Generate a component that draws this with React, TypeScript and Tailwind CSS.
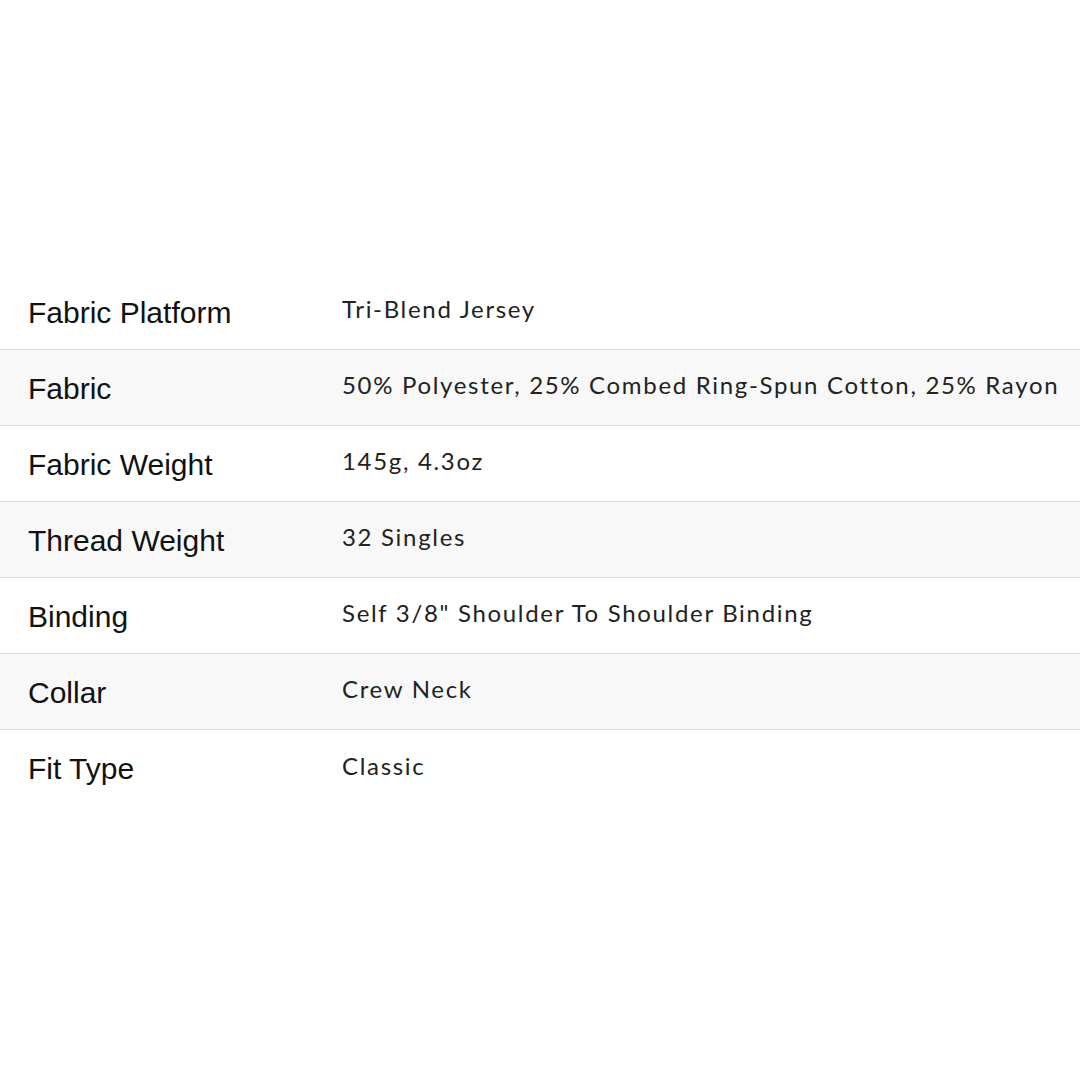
const specs = [
  { label: "Fabric Platform", value: "Tri-Blend Jersey" },
  { label: "Fabric", value: "50% Polyester, 25% Combed Ring-Spun Cotton, 25% Rayon" },
  { label: "Fabric Weight", value: "145g, 4.3oz" },
  { label: "Thread Weight", value: "32 Singles" },
  { label: "Binding", value: 'Self 3/8" Shoulder To Shoulder Binding' },
  { label: "Collar", value: "Crew Neck" },
  { label: "Fit Type", value: "Classic" },
];

export default function App() {
  return (
    <div className="h-[1080px] w-[1080px] bg-white flex flex-col justify-center">
      <div className="flex flex-col">
        {specs.map((row, i) => (
          <div
            key={row.label}
            className={
              "flex items-center h-[76px] " +
              (i % 2 === 1 ? "bg-[#f8f8f8] " : "bg-white ") +
              (i < specs.length - 1 ? "border-b-[1.5px] border-[#dcdcdc]" : "")
            }
          >
            <div className="w-[342px] pl-[28px] pt-[1px] text-[30px] text-[#111] font-['Liberation_Sans',Arial,sans-serif]">
              {row.label}
            </div>
            <div className="flex-1 pb-[5px] text-[24px] tracking-[0.07em] text-[#222] font-['Lato',sans-serif] whitespace-nowrap">
              {row.value}
            </div>
          </div>
        ))}
      </div>
    </div>
  );
}
